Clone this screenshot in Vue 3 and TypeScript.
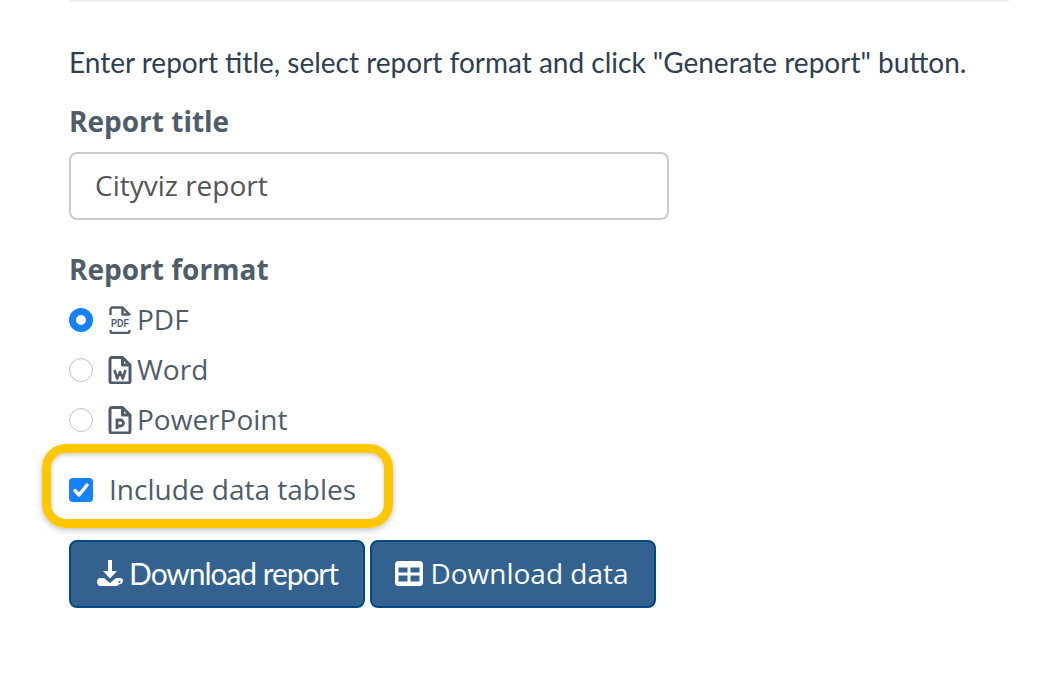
<script setup lang="ts">
import { ref } from 'vue'

const title = ref('Cityviz report')
const format = ref('pdf')
const tables = ref(true)
</script>

<template>
  <main class="page">
    <hr class="rule" />
    <p class="intro">Enter report title, select report format and click "Generate report" button.</p>

    <label class="field-label" for="report-title">Report title</label>
    <input id="report-title" v-model="title" class="text-input" type="text" />

    <div class="field-label format-label">Report format</div>
    <div class="radios">
      <label class="radio-row">
        <input v-model="format" class="radio" type="radio" value="pdf" />
        <svg class="file-icon" viewBox="0 0 24 28" fill="none" stroke="#4f5d6b" stroke-width="2.400">
          <path d="M2.500 9V3.500A2 2 0 0 1 4.500 1.500H14.500L21.500 8.500V9" stroke-linejoin="round" />
          <path d="M14.500 2v6.500h7" stroke-linejoin="round" />
          <path d="M2.500 24v1a2 2 0 0 0 2 2h15a2 2 0 0 0 2-2v-1" />
          <text x="12" y="21" class="pdf-mark" textLength="18" lengthAdjust="spacingAndGlyphs">PDF</text>
        </svg>
        <span class="row-text">PDF</span>
      </label>
      <label class="radio-row">
        <input v-model="format" class="radio" type="radio" value="word" />
        <svg class="file-icon" viewBox="0 0 24 28" fill="none" stroke="#4f5d6b" stroke-width="3">
          <path d="M4 1.500H14.500L22 9v16a2 2 0 0 1-2 2H4a2 2 0 0 1-2-2V3.500a2 2 0 0 1 2-2z" stroke-linejoin="round" />
          <path d="M14.500 2v7h7" stroke-linejoin="round" />
          <path d="M6.500 14l2.700 8.500 2.800-6.500 2.800 6.500 2.700-8.500" stroke-width="2.600" stroke-linejoin="round" />
        </svg>
        <span class="row-text">Word</span>
      </label>
      <label class="radio-row">
        <input v-model="format" class="radio" type="radio" value="ppt" />
        <svg class="file-icon" viewBox="0 0 24 28" fill="none" stroke="#4f5d6b" stroke-width="3">
          <path d="M4 1.500H14.500L22 9v16a2 2 0 0 1-2 2H4a2 2 0 0 1-2-2V3.500a2 2 0 0 1 2-2z" stroke-linejoin="round" />
          <path d="M14.500 2v7h7" stroke-linejoin="round" />
          <path d="M9 23V14h3.500a3 3 0 0 1 0 6H9" stroke-width="2.800" />
        </svg>
        <span class="row-text">PowerPoint</span>
      </label>
    </div>

    <div class="check-wrap">
      <label class="check-row">
        <span class="check-box">
          <input v-model="tables" class="check" type="checkbox" />
          <svg v-if="tables" class="check-mark" viewBox="0 0 24 24" fill="none" stroke="#fff" stroke-width="3.500" stroke-linecap="round" stroke-linejoin="round">
            <path d="M6 12.500l4 4.500 8-10" />
          </svg>
        </span>
        <span class="row-text">Include data tables</span>
      </label>
      <div class="highlight"></div>
    </div>

    <div class="actions">
      <button class="btn btn-report" type="button">
        <svg class="btn-icon report-icon" viewBox="0 0 28 28" fill="#fff">
          <path d="M12 1h4v11h5l-7 7.500L7 12h5z" />
          <path d="M1 22.500c0-2 1.500-3.500 3.500-3.500h3.500l6 5 6-5h4.500c1.500 0 2.500 1 2.500 2.500S26 25 24.500 25 22 27 20 27H4.500C2.500 27 1 25 1 22.500z" />
          <circle cx="23.500" cy="23" r="1" fill="#336291" />
        </svg>
        <span class="report-text">Download report</span>
      </button>
      <button class="btn btn-data" type="button">
        <svg class="btn-icon table-icon" viewBox="0 0 28 25">
          <rect width="28" height="25" rx="3.500" fill="#fff" />
          <path d="M3.500 6.500h9v5h-9zM15.500 6.500h9v5h-9zM3.500 14.500h9v6h-9zM15.500 14.500h9v6h-9z" fill="#336291" />
        </svg>
        <span>Download data</span>
      </button>
    </div>
  </main>
</template>

<style>
body {
  margin: 0;
  background: #fff;
}
</style>

<style scoped>
.page {
  box-sizing: border-box;
  width: 1050px;
  height: 674px;
  padding: 0 41px 0 69px;
  overflow: hidden;
  background: #fff;
  color: #4f5d6b;
  font-family: "Open Sans", sans-serif;
}

.rule {
  height: 2px;
  margin: 0;
  border: 0;
  background: #eeeeee;
}

.intro {
  margin: 43px 0 0;
  color: #2f4053;
  font-family: Lato, sans-serif;
  font-size: 28px;
  line-height: 34px;
  white-space: nowrap;
}

.field-label {
  display: block;
  margin-top: 25px;
  font-size: 28px;
  font-weight: 700;
  line-height: 34px;
}

.text-input {
  display: block;
  box-sizing: border-box;
  width: 600px;
  height: 68px;
  margin-top: 14px;
  padding: 0 24px 2px;
  border: 2px solid #cccccc;
  border-radius: 8px;
  outline: none;
  color: #555555;
  font: 28px "Open Sans", sans-serif;
}

.format-label {
  margin-top: 32px;
}

.radios {
  display: flex;
  flex-direction: column;
  gap: 14px;
  margin-top: 16px;
}

.radio-row {
  display: flex;
  align-items: center;
  height: 36px;
  font-size: 28px;
}

.row-text {
  padding-bottom: 2px;
}

.radio {
  box-sizing: border-box;
  width: 24px;
  height: 24px;
  margin: 0 15px 0 0;
  border: 1px solid #c4c4c4;
  border-radius: 50%;
  background: #fff;
  appearance: none;
  box-shadow: inset 0 1px 1px rgba(0, 0, 0, 0.05);
}

.radio:checked {
  border: 7px solid #1581fb;
}

.file-icon {
  width: 24px;
  height: 28px;
  margin-right: 5px;
}

.pdf-mark {
  fill: #4f5d6b;
  stroke: none;
  font-family: "Liberation Sans", sans-serif;
  font-size: 10px;
  font-weight: 700;
  text-anchor: middle;
}

.check-wrap {
  position: relative;
  margin-top: 34px;
}

.check-row {
  display: flex;
  align-items: center;
  height: 36px;
  font-size: 28px;
}

.check-box {
  position: relative;
  width: 24px;
  height: 24px;
  margin-right: 16px;
}

.check {
  display: block;
  box-sizing: border-box;
  width: 24px;
  height: 24px;
  margin: 0;
  border-radius: 4px;
  background-color: #1581fb;
  appearance: none;
}

.check-mark {
  position: absolute;
  top: 0;
  left: 0;
  width: 24px;
  height: 24px;
}

.highlight {
  position: absolute;
  top: -28px;
  left: -27px;
  box-sizing: border-box;
  width: 351px;
  height: 84px;
  border: 9px solid #ffc700;
  border-radius: 24px;
  box-shadow: 0 2px 6px rgba(0, 0, 0, 0.25), inset 0 2px 4px rgba(0, 0, 0, 0.2);
  pointer-events: none;
}

.actions {
  display: flex;
  gap: 5px;
  margin-top: 32px;
}

.btn {
  display: flex;
  align-items: center;
  justify-content: center;
  box-sizing: border-box;
  height: 68px;
  padding: 0 0 2px;
  border: 2px solid #004a80;
  border-radius: 8px;
  background: #336291;
  color: #fff;
  font-size: 28px;
}

.btn-report {
  width: 296px;
  font-family: Lato, sans-serif;
}

.report-text {
  font-size: 30px;
  letter-spacing: -1.07px;
}

.btn-data {
  width: 286px;
  font-family: "Open Sans", sans-serif;
}

.btn-icon {
  width: 28px;
  height: 28px;
  margin-right: 6px;
}

.report-icon {
  margin-right: 5px;
}

.table-icon {
  height: 25px;
  margin-left: -2px;
  margin-right: 7px;
}
</style>
